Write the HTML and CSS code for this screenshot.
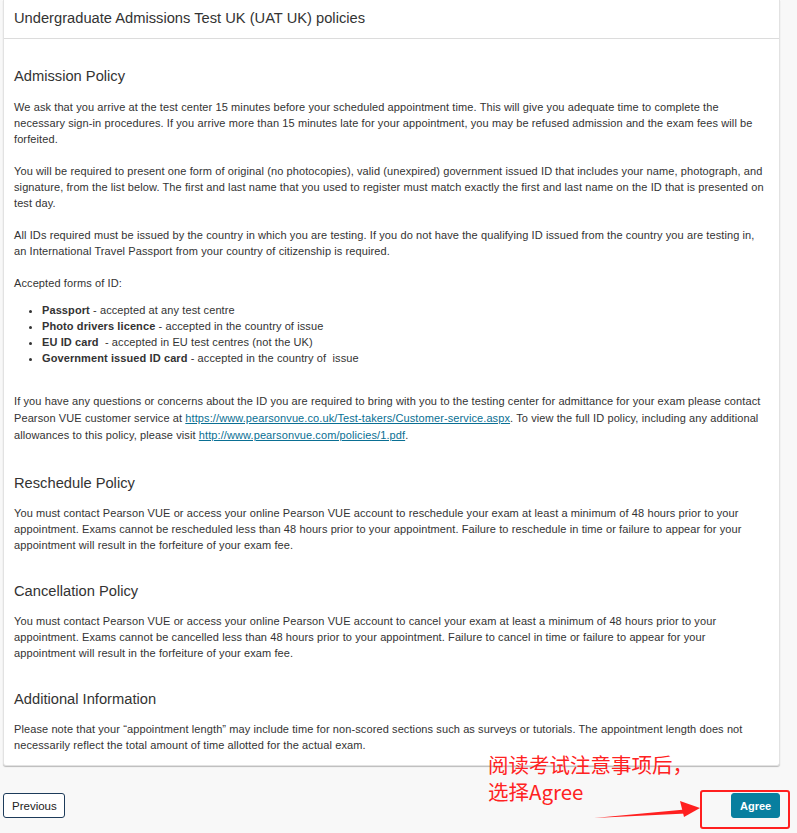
FILE: index.html
```html
<!DOCTYPE html>
<html lang="en">
<head>
<meta charset="utf-8">
<title>UAT UK policies</title>
<link rel="stylesheet" href="styles.css">
</head>
<body>
<div class="page">
  <div class="card">
    <div class="card-header">Undergraduate Admissions Test UK (UAT UK) policies</div>
    <div class="card-body">
      <h4 class="first">Admission Policy</h4>
      <p>We ask that you arrive at the test center 15 minutes before your scheduled appointment time. This will give you adequate time to complete the necessary sign-in procedures. If you arrive more than 15 minutes late for your appointment, you may be refused admission and the exam fees will be forfeited.</p>
      <p>You will be required to present one form of original (no photocopies), valid (unexpired) government issued ID that includes your name, photograph, and signature, from the list below. The first and last name that you used to register must match exactly the first and last name on the ID that is presented on test day.</p>
      <p>All IDs required must be issued by the country in which you are testing. If you do not have the qualifying ID issued from the country you are testing in, an International Travel Passport from your country of citizenship is required.</p>
      <p class="lead-in">Accepted forms of ID:</p>
      <ul class="id-list">
        <li><b>Passport</b> - accepted at any test centre</li>
        <li><b>Photo drivers licence</b> - accepted in the country of issue</li>
        <li><b>EU ID card</b> &nbsp;- accepted in EU test centres (not the UK)</li>
        <li><b>Government issued ID card</b> - accepted in the country of &nbsp;issue</li>
      </ul>
      <p class="links">If you have any questions or concerns about the ID you are required to bring with you to the testing center for admittance for your exam please contact Pearson VUE customer service at <a href="#">https://www.pearsonvue.co.uk/Test-takers/Customer-service.aspx</a>. To view the full ID policy, including any additional allowances to this policy, please visit <a href="#">http://www.pearsonvue.com/policies/1.pdf</a>.</p>
      <h4>Reschedule Policy</h4>
      <p>You must contact Pearson VUE or access your online Pearson VUE account to reschedule your exam at least a minimum of 48 hours prior to your appointment. Exams cannot be rescheduled less than 48 hours prior to your appointment. Failure to reschedule in time or failure to appear for your appointment will result in the forfeiture of your exam fee.</p>
      <h4>Cancellation Policy</h4>
      <p>You must contact Pearson VUE or access your online Pearson VUE account to cancel your exam at least a minimum of 48 hours prior to your appointment. Exams cannot be cancelled less than 48 hours prior to your appointment. Failure to cancel in time or failure to appear for your appointment will result in the forfeiture of your exam fee.</p>
      <h4>Additional Information</h4>
      <p class="last">Please note that your “appointment length” may include time for non-scored sections such as surveys or tutorials. The appointment length does not necessarily reflect the total amount of time allotted for the actual exam.</p>
    </div>
  </div>
  <div class="actions">
    <button class="btn btn-outline">Previous</button>
    <button class="btn btn-primary">Agree</button>
  </div>
</div>

<div class="note">阅读考试注意事项后，<br>选择Agree</div>
<div class="highlight"></div>
<svg class="arrow" width="120" height="30" viewBox="0 0 120 30" xmlns="http://www.w3.org/2000/svg">
  <polygon points="0,23 91,14.5 92,18.5" fill="#ff2020"/>
  <polygon points="86,6 106,13 90,22" fill="#ff2020"/>
</svg>
</body>
</html>
```
FILE: styles.css
```css
html, body {
  margin: 0;
  padding: 0;
}
body {
  background: #f8f8f8;
  font-family: "Liberation Sans", Arial, sans-serif;
  color: #333;
  width: 797px;
  height: 833px;
  overflow: hidden;
  position: relative;
}
.page {
  padding: 0 17px 0 3px;
}
.card {
  background: #fff;
  border: 1px solid #e2e2e2;
  border-top: none;
  border-radius: 0 0 3px 3px;
  box-shadow: 0 1px 1px rgba(0, 0, 0, 0.25);
}
.card-header {
  font-size: 14.7px;
  line-height: 20px;
  padding: 8px 10px 10px;
  border-bottom: 1px solid #dcdcdc;
}
.card-body {
  padding: 1px 11px 12px 10px;
  font-size: 11px;
  line-height: 16px;
  letter-spacing: 0.1px;
}
h4 {
  font-size: 14.7px;
  font-weight: normal;
  line-height: 18px;
  margin: 29px 0 13px;
  letter-spacing: 0;
}
h4.first {
  margin-top: 27px;
  margin-bottom: 14px;
}
p {
  margin: 0 0 16px;
}
p.lead-in {
  margin-bottom: 11px;
}
.id-list {
  margin: 0 0 27px;
  padding-left: 28px;
}
p.links {
  line-height: 17px;
  margin-bottom: 30px;
}
p.last {
  margin-bottom: 0;
}
a {
  color: #0a6f93;
  text-decoration: underline;
}
.actions {
  display: flex;
  justify-content: space-between;
  margin-top: 27px;
}
.btn {
  font-family: "Liberation Sans", Arial, sans-serif;
  height: 25px;
  border-radius: 3px;
  padding: 0 8px;
  cursor: pointer;
}
.btn-outline {
  background: #fff;
  border: 1px solid #1d3b5a;
  color: #222;
  font-size: 11.5px;
  width: 62px;
}
.btn-primary {
  background: #087f9f;
  border: 1px solid #087f9f;
  color: #fff;
  font-size: 11px;
  font-weight: bold;
  width: 49px;
}
.note {
  position: absolute;
  left: 488px;
  top: 751px;
  font-family: "Noto Sans CJK SC", "Liberation Sans", sans-serif;
  font-size: 20.5px;
  line-height: 27px;
  color: #ff2222;
  white-space: nowrap;
}
.highlight {
  position: absolute;
  left: 700px;
  top: 790px;
  width: 86px;
  height: 35px;
  border: 2.5px solid #ff2020;
  border-radius: 3px;
}
.arrow {
  position: absolute;
  left: 594px;
  top: 795px;
}
```
